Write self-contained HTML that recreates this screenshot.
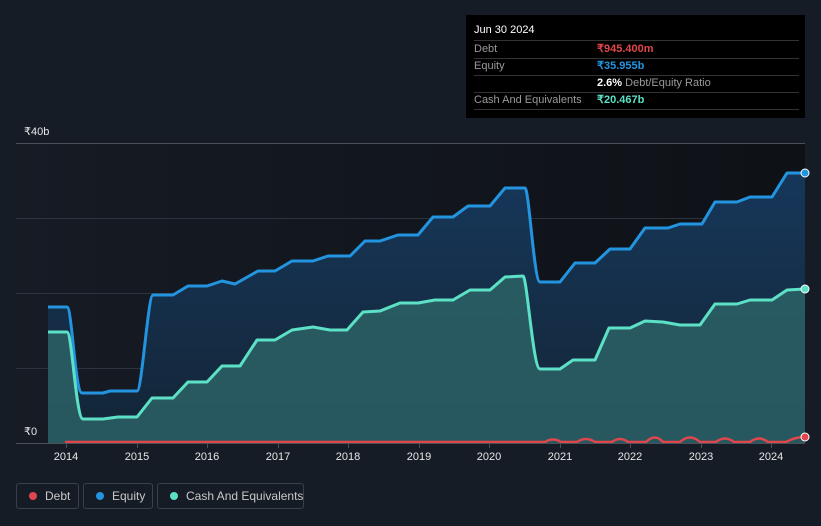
<!DOCTYPE html>
<html><head><style>
body{margin:0;width:821px;height:526px;background:#161c26;font-family:"Liberation Sans",sans-serif;overflow:hidden;position:relative}
.tt{position:absolute;left:466px;top:15px;width:339px;height:103px;background:#000;color:#fff;font-size:11px}
.tt .r{position:absolute;left:8px;width:325px;height:17px;border-bottom:1px solid #333;line-height:17px}
.tt .l{color:#9a9a9a}
.tt .v{position:absolute;left:123px;top:0;font-weight:bold;white-space:nowrap}
.lg{position:absolute;top:483px;height:26px;border:1px solid #3a404b;border-radius:3px;color:#c8c8c8;font-size:12px;line-height:24px;box-sizing:border-box;white-space:nowrap}
.lg i{position:absolute;left:12px;top:8px;width:8px;height:8px;border-radius:50%}
.lg span{position:absolute;left:28px}
</style></head><body>
<svg width="821" height="526" style="position:absolute;left:0;top:0">
<defs>
<linearGradient id="bg" x1="0" x2="1" y1="0" y2="0"><stop offset="0" stop-color="#161b24"/><stop offset="1" stop-color="#0e1116"/></linearGradient>
<linearGradient id="eq" x1="0" x2="0" y1="0" y2="1"><stop offset="0" stop-color="#16375a"/><stop offset="1" stop-color="#142536"/></linearGradient>
</defs>
<rect x="16" y="143" width="789" height="300" fill="url(#bg)"/>
<g stroke="#2d333d" stroke-width="1">
<line x1="16" x2="805" y1="143.5" y2="143.5" stroke="#4a4f58"/>
<line x1="16" x2="805" y1="218.5" y2="218.5"/>
<line x1="16" x2="805" y1="293.5" y2="293.5"/>
<line x1="16" x2="805" y1="368.5" y2="368.5"/>
</g>
<path d="M48,307 L67,307 C72,307 75,393 82,393 L103,393 L110,391 L137,391 C142,391 148,295 153,295 L173,295 L188,286 L207,286 L222,281 L235,284 L258,271 L275,271 L292,261 L313,261 L328,256 L350,256 L365,241 L380,241 L398,235 L418,235 L433,217 L453,217 L468,206 L490,206 L505,188 L525,188 C529,188 534,282 540,282 L560,282 L575,263 L595,263 L610,249 L630,249 L645,228 L668,228 L680,224 L702,224 L715,202 L737,202 L750,197 L772,197 L787,173 L805,173 L805,443 L48,443Z" fill="url(#eq)"/>
<path d="M48,332 L67,332 C72,332 76,419 83,419 L103,419 L118,417 L137,417 L152,398 L173,398 L188,382 L207,382 L222,366 L240,366 L257,340 L275,340 L292,330 L313,327 L330,330 L347,330 L363,312 L380,311 L400,303 L418,303 L435,300 L453,300 L470,290 L490,290 L505,277 L523,276 C527,276 533,369 540,369 L560,369 L573,360 L595,360 L609,328 L630,328 L645,321 L663,322 L680,325 L700,325 L715,304 L737,304 L750,300 L772,300 L787,290 L805,289 L805,443 L48,443Z" fill="#2b6266" fill-opacity="0.85"/>
<path d="M48,307 L67,307 C72,307 75,393 82,393 L103,393 L110,391 L137,391 C142,391 148,295 153,295 L173,295 L188,286 L207,286 L222,281 L235,284 L258,271 L275,271 L292,261 L313,261 L328,256 L350,256 L365,241 L380,241 L398,235 L418,235 L433,217 L453,217 L468,206 L490,206 L505,188 L525,188 C529,188 534,282 540,282 L560,282 L575,263 L595,263 L610,249 L630,249 L645,228 L668,228 L680,224 L702,224 L715,202 L737,202 L750,197 L772,197 L787,173 L805,173" fill="none" stroke="#2394df" stroke-width="3" stroke-linejoin="round"/>
<path d="M48,332 L67,332 C72,332 76,419 83,419 L103,419 L118,417 L137,417 L152,398 L173,398 L188,382 L207,382 L222,366 L240,366 L257,340 L275,340 L292,330 L313,327 L330,330 L347,330 L363,312 L380,311 L400,303 L418,303 L435,300 L453,300 L470,290 L490,290 L505,277 L523,276 C527,276 533,369 540,369 L560,369 L573,360 L595,360 L609,328 L630,328 L645,321 L663,322 L680,325 L700,325 L715,304 L737,304 L750,300 L772,300 L787,290 L805,289" fill="none" stroke="#5ce0c6" stroke-width="3" stroke-linejoin="round"/>
<path d="M65,442 L545,442 Q553,437 561,442 Q569,442 577,442 Q586,436 595,442 Q603,442 612,442 Q620,436 628,442 Q637,442 646,442 Q655,433 663,442 Q672,442 680,442 Q690,433 700,442 Q708,442 716,442 Q725,435 734,442 Q742,442 750,442 Q759,435 768,442 Q778,442 786,442 Q795,437 805,437" fill="none" stroke="#e0474c" stroke-width="2.5"/>
<circle cx="805" cy="173" r="4" fill="#2394df" stroke="#fff" stroke-width="1"/>
<circle cx="805" cy="289" r="4" fill="#5ce0c6" stroke="#fff" stroke-width="1"/>
<circle cx="805" cy="437" r="4" fill="#e0474c" stroke="#fff" stroke-width="1"/>
<line x1="16" x2="805" y1="443.5" y2="443.5" stroke="#4a4f58"/>
<g stroke="#4a4f58"><line x1="66.5" x2="66.5" y1="443" y2="448"/><line x1="137.5" x2="137.5" y1="443" y2="448"/><line x1="207.5" x2="207.5" y1="443" y2="448"/><line x1="278.5" x2="278.5" y1="443" y2="448"/><line x1="348.5" x2="348.5" y1="443" y2="448"/><line x1="419.5" x2="419.5" y1="443" y2="448"/><line x1="489.5" x2="489.5" y1="443" y2="448"/><line x1="560.5" x2="560.5" y1="443" y2="448"/><line x1="630.5" x2="630.5" y1="443" y2="448"/><line x1="701.5" x2="701.5" y1="443" y2="448"/><line x1="771.5" x2="771.5" y1="443" y2="448"/></g>
<g fill="#e6e6e6" font-size="11" font-family="Liberation Sans,sans-serif" text-anchor="middle">
<text x="66" y="460">2014</text><text x="137" y="460">2015</text><text x="207" y="460">2016</text><text x="278" y="460">2017</text><text x="348" y="460">2018</text><text x="419" y="460">2019</text><text x="489" y="460">2020</text><text x="560" y="460">2021</text><text x="630" y="460">2022</text><text x="701" y="460">2023</text><text x="771" y="460">2024</text>
</g>
<text x="24" y="135" fill="#e6e6e6" font-size="11" font-family="Liberation Sans,sans-serif">₹40b</text>
<text x="24" y="435" fill="#e6e6e6" font-size="11" font-family="Liberation Sans,sans-serif">₹0</text>
</svg>
<div class="tt">
<div style="position:absolute;left:8px;top:9px;font-size:11px">Jun 30 2024</div>
<div class="r" style="top:25px;border-top:1px solid #333"><span class="l">Debt</span><span class="v" style="color:#e0474c">₹945.400m</span></div>
<div class="r" style="top:43px"><span class="l">Equity</span><span class="v" style="color:#2394df">₹35.955b</span></div>
<div class="r" style="top:60px"><span class="v">2.6% <span style="color:#9a9a9a;font-weight:normal">Debt/Equity Ratio</span></span></div>
<div class="r" style="top:77px"><span class="l">Cash And Equivalents</span><span class="v" style="color:#5ce0c6">₹20.467b</span></div>
</div>
<div class="lg" style="left:16px;width:63px"><i style="background:#e0474c"></i><span>Debt</span></div>
<div class="lg" style="left:83px;width:70px"><i style="background:#2394df"></i><span>Equity</span></div>
<div class="lg" style="left:157px;width:147px"><i style="background:#5ce0c6"></i><span>Cash And Equivalents</span></div>
</body></html>
